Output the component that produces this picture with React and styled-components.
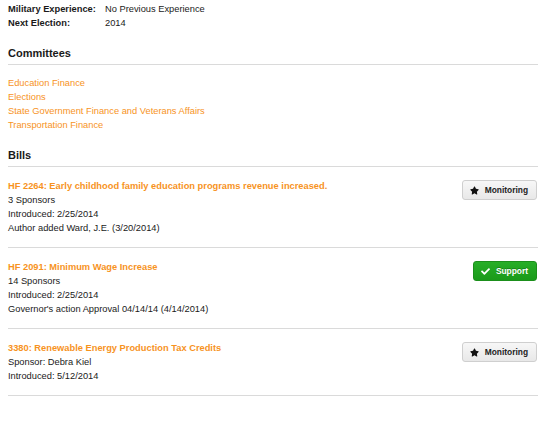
import styled, { createGlobalStyle } from 'styled-components';
import { FaStar, FaCheck } from 'react-icons/fa';

const GlobalStyle = createGlobalStyle`
    body {
        margin: 0;
        background: #fff;
        font-family: "Liberation Sans", Arial, sans-serif;
        font-size: 9.3px;
        color: #1a1a1a;
    }
`

const Page = styled.div`
    width: 530px;
    padding: 2px 0 0 8px;
`

const InfoTable = styled.div`
    display: grid;
    grid-template-columns: 97px 1fr;
    line-height: 14px;
`

const InfoLabel = styled.div`
    font-weight: bold;
    white-space: nowrap;
`

const SectionTitle = styled.h2`
    margin: 15px 0 0;
    padding-bottom: 3px;
    font-size: 11px;
    line-height: 16px;
    font-weight: bold;
    border-bottom: 1px solid #dadada;
`

const LinkList = styled.ul`
    list-style: none;
    margin: 11px 0 0;
    padding: 0;
    line-height: 14px;
`

const OrangeLink = styled.a`
    color: #f7931e;
    text-decoration: none;
`

const BillRow = styled.div`
    display: flex;
    justify-content: space-between;
    align-items: flex-start;
    padding: 12px 0;
    border-bottom: 1px solid #dadada;
    line-height: 14px;
`

const BillTitle = styled(OrangeLink)`
    font-weight: bold;
    display: block;
`

const ActionButton = styled.button`
    display: flex;
    align-items: center;
    gap: 6px;
    height: 20px;
    margin: 1px 1px 0 0;
    padding: 0 8px 0 7px;
    border-radius: 3px;
    font-family: "Liberation Sans", Arial, sans-serif;
    font-size: 8.4px;
    font-weight: bold;
    cursor: pointer;
    color: ${p => (p.$green ? '#fff' : '#222')};
    border: 1px solid ${p => (p.$green ? '#1b8f1b' : '#cfcfcf')};
    background: ${p => (p.$green
        ? 'linear-gradient(#27ae27, #1a9a1a)'
        : 'linear-gradient(#f7f7f7, #e8e8e8)')};
    text-shadow: ${p => (p.$green ? '0 -1px 0 rgba(0,0,0,0.25)' : 'none')};
    svg {
        font-size: 9px;
        color: ${p => (p.$green ? '#fff' : '#111')};
    }
`

const committees = [
    'Education Finance',
    'Elections',
    'State Government Finance and Veterans Affairs',
    'Transportation Finance',
]

const bills = [
    {
        title: 'HF 2264: Early childhood family education programs revenue increased.',
        lines: ['3 Sponsors', 'Introduced: 2/25/2014', 'Author added Ward, J.E. (3/20/2014)'],
        status: 'monitoring',
    },
    {
        title: 'HF 2091: Minimum Wage Increase',
        lines: ['14 Sponsors', 'Introduced: 2/25/2014', "Governor's action Approval 04/14/14 (4/14/2014)"],
        status: 'support',
    },
    {
        title: '3380: Renewable Energy Production Tax Credits',
        lines: ['Sponsor: Debra Kiel', 'Introduced: 5/12/2014'],
        status: 'monitoring',
    },
]

function App() {
    return (
        <>
            <GlobalStyle />
            <Page>
                <InfoTable>
                    <InfoLabel>Military Experience:</InfoLabel>
                    <div>No Previous Experience</div>
                    <InfoLabel>Next Election:</InfoLabel>
                    <div>2014</div>
                </InfoTable>

                <SectionTitle>Committees</SectionTitle>
                <LinkList>
                    {committees.map(c => (
                        <li key={c}><OrangeLink href="#">{c}</OrangeLink></li>
                    ))}
                </LinkList>

                <SectionTitle>Bills</SectionTitle>
                {bills.map(b => (
                    <BillRow key={b.title}>
                        <div>
                            <BillTitle href="#">{b.title}</BillTitle>
                            {b.lines.map(l => <div key={l}>{l}</div>)}
                        </div>
                        {b.status === 'support' ? (
                            <ActionButton $green><FaCheck /> Support</ActionButton>
                        ) : (
                            <ActionButton><FaStar /> Monitoring</ActionButton>
                        )}
                    </BillRow>
                ))}
            </Page>
        </>
    );
}

export default App;
